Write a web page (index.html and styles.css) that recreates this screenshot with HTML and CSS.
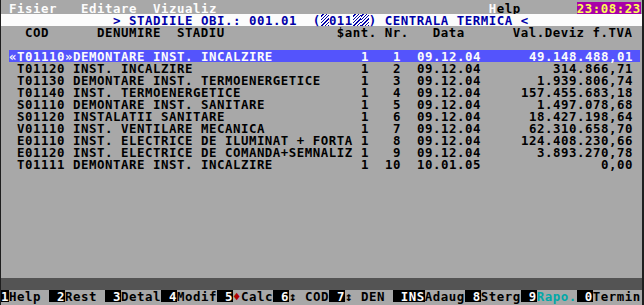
FILE: index.html
```html
<!DOCTYPE html>
<html lang="ro">
<head>
    <meta charset="UTF-8">
    <title>Stadiile obiectului</title>
    <link rel="stylesheet" href="styles.css">
</head>
<body>

<div class="screen">
    <div class="row menu"> <b class="hot">Fisier</b>   <b class="hot">Editare</b>  <b class="hot">Vizualiz</b>                                  <b class="hot">H</b>elp       <span class="clock">23:08:23</span></div>
    <div class="row title">&gt; STADIILE OBI.: 001.01  (<i class="hatch"></i>011<i class="hatch"></i><i class="hatch"></i>) CENTRALA TERMICA &lt;</div>
    <div class="row head">   COD      DENUMIRE  STADIU              $ant. Nr.   Data      Val.Deviz f.TVA</div>

    <div class="list">
        <div class="rec sel"><span>«T01110»</span><span>DEMONTARE INST. INCALZIRE</span><span>1</span><span class="num">1</span><span class="num">09.12.04</span><span class="num">49.148.488,01</span></div>
        <div class="rec"><span>T01120</span><span>INST. INCALZIRE</span><span>1</span><span class="num">2</span><span class="num">09.12.04</span><span class="num">314.866,71</span></div>
        <div class="rec"><span>T01130</span><span>DEMONTARE INST. TERMOENERGETICE</span><span>1</span><span class="num">3</span><span class="num">09.12.04</span><span class="num">1.939.806,74</span></div>
        <div class="rec"><span>T01140</span><span>INST. TERMOENERGETICE</span><span>1</span><span class="num">4</span><span class="num">09.12.04</span><span class="num">157.455.683,18</span></div>
        <div class="rec"><span>S01110</span><span>DEMONTARE INST. SANITARE</span><span>1</span><span class="num">5</span><span class="num">09.12.04</span><span class="num">1.497.078,68</span></div>
        <div class="rec"><span>S01120</span><span>INSTALATII SANITARE</span><span>1</span><span class="num">6</span><span class="num">09.12.04</span><span class="num">18.427.198,64</span></div>
        <div class="rec"><span>V01110</span><span>INST. VENTILARE MECANICA</span><span>1</span><span class="num">7</span><span class="num">09.12.04</span><span class="num">62.310.658,70</span></div>
        <div class="rec"><span>E01110</span><span>INST. ELECTRICE DE ILUMINAT + FORTA</span><span>1</span><span class="num">8</span><span class="num">09.12.04</span><span class="num">124.408.230,66</span></div>
        <div class="rec"><span>E01120</span><span>INST. ELECTRICE DE COMANDA+SEMNALIZ</span><span>1</span><span class="num">9</span><span class="num">09.12.04</span><span class="num">3.893.270,78</span></div>
        <div class="rec"><span>T01111</span><span>DEMONTARE INST. INCALZIRE</span><span>1</span><span class="num">10</span><span class="num">10.01.05</span><span class="num">0,00</span></div>
    </div>

    <div class="row status"></div>
    <div class="row keys"><span class="fk">1</span>Help <span class="fk"> 2</span>Rest <span class="fk"> 3</span>Detal<span class="fk"> 4</span>Modif<span class="fk"> 5</span><span class="dia">♦</span>Calc<span class="fk"> 6</span>↕ COD<span class="fk"> 7</span>↕ DEN <span class="fk"> INS</span>Adaug<span class="fk"> 8</span>Sterg<span class="fk"> 9</span><span class="rap">Rapo.</span><span class="fk"> 0</span>Termin</div>
</div>

</body>
</html>
```

FILE: styles.css
```css
body, html {
    margin: 0;
    padding: 0;
    background-color: #a8a8a8;
}

/* 80x25 text screen, 8x12 cells */
.screen {
    width: 641px;
    height: 303px;
    padding-top: 2px;
    border-left: 1px solid #1e1e1e;
    border-right: 2px solid #1e1e1e;
    display: flex;
    flex-direction: column;
    font: bold 12.4px/13px "DejaVu Sans Mono", monospace;
    letter-spacing: 0.535px;
    color: #000;
}

.row {
    height: 12px;
    flex: none;
    white-space: pre;
}

.menu .hot {
    color: #fcfcfc;
}

.clock, .fk, .hatch {
    display: inline-block;
    height: 12px;
    vertical-align: top;
}

.clock {
    background-color: #a800a8;
    color: #fcfc54;
}

.title {
    background-color: #fcfcfc;
    color: #0000a8;
    padding-left: 112px;
}

.hatch {
    width: 8px;
    background: repeating-linear-gradient(-45deg, #0000a8 0 1px, #fcfcfc 1px 2.4px);
}

.list {
    height: 240px;
    flex: none;
    padding-top: 12px;
    box-sizing: border-box;
}

.rec {
    display: grid;
    grid-template-columns: 56px 288px 8px 32px 80px 152px;
    height: 12px;
    padding-left: 16px;
}

.rec.sel {
    grid-template-columns: 64px 288px 8px 32px 80px 152px;
    width: 631px;
    margin-left: 8px;
    padding-left: 0;
    background-color: #5454fc;
    color: #fcfcfc;
}

.num {
    text-align: right;
}

.status {
    background-color: #545454;
}

.fk {
    background-color: #000;
    color: #fcfcfc;
}

.dia {
    color: #b00000;
}

.rap {
    color: #00a8a8;
}
```
